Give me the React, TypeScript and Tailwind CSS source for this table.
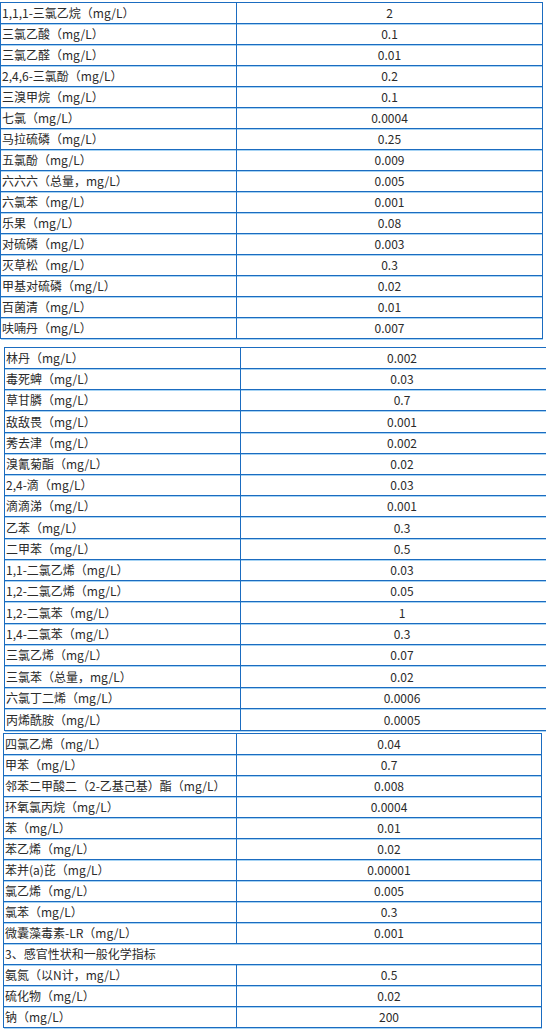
type Row = { name: string; value?: string; span?: boolean; tall?: boolean };

const tableOne: Row[] = [
  { name: "1,1,1-三氯乙烷（mg/L）", value: "2" },
  { name: "三氯乙酸（mg/L）", value: "0.1" },
  { name: "三氯乙醛（mg/L）", value: "0.01" },
  { name: "2,4,6-三氯酚（mg/L）", value: "0.2" },
  { name: "三溴甲烷（mg/L）", value: "0.1" },
  { name: "七氯（mg/L）", value: "0.0004" },
  { name: "马拉硫磷（mg/L）", value: "0.25" },
  { name: "五氯酚（mg/L）", value: "0.009" },
  { name: "六六六（总量，mg/L）", value: "0.005" },
  { name: "六氯苯（mg/L）", value: "0.001" },
  { name: "乐果（mg/L）", value: "0.08" },
  { name: "对硫磷（mg/L）", value: "0.003" },
  { name: "灭草松（mg/L）", value: "0.3" },
  { name: "甲基对硫磷（mg/L）", value: "0.02" },
  { name: "百菌清（mg/L）", value: "0.01" },
  { name: "呋喃丹（mg/L）", value: "0.007" },
];

const tableTwo: Row[] = [
  { name: "林丹（mg/L）", value: "0.002" },
  { name: "毒死蜱（mg/L）", value: "0.03" },
  { name: "草甘膦（mg/L）", value: "0.7" },
  { name: "敌敌畏（mg/L）", value: "0.001", tall: true },
  { name: "莠去津（mg/L）", value: "0.002" },
  { name: "溴氰菊酯（mg/L）", value: "0.02" },
  { name: "2,4-滴（mg/L）", value: "0.03" },
  { name: "滴滴涕（mg/L）", value: "0.001" },
  { name: "乙苯（mg/L）", value: "0.3", tall: true },
  { name: "二甲苯（mg/L）", value: "0.5" },
  { name: "1,1-二氯乙烯（mg/L）", value: "0.03" },
  { name: "1,2-二氯乙烯（mg/L）", value: "0.05" },
  { name: "1,2-二氯苯（mg/L）", value: "1", tall: true },
  { name: "1,4-二氯苯（mg/L）", value: "0.3" },
  { name: "三氯乙烯（mg/L）", value: "0.07" },
  { name: "三氯苯（总量，mg/L）", value: "0.02", tall: true },
  { name: "六氯丁二烯（mg/L）", value: "0.0006" },
  { name: "丙烯酰胺（mg/L）", value: "0.0005", tall: true },
];

const tableThree: Row[] = [
  { name: "四氯乙烯（mg/L）", value: "0.04" },
  { name: "甲苯（mg/L）", value: "0.7" },
  { name: "邻苯二甲酸二（2-乙基己基）酯（mg/L）", value: "0.008" },
  { name: "环氧氯丙烷（mg/L）", value: "0.0004" },
  { name: "苯（mg/L）", value: "0.01" },
  { name: "苯乙烯（mg/L）", value: "0.02" },
  { name: "苯并(a)芘（mg/L）", value: "0.00001" },
  { name: "氯乙烯（mg/L）", value: "0.005" },
  { name: "氯苯（mg/L）", value: "0.3" },
  { name: "微囊藻毒素-LR（mg/L）", value: "0.001" },
  { name: "3、感官性状和一般化学指标", span: true },
  { name: "氨氮（以N计，mg/L）", value: "0.5" },
  { name: "硫化物（mg/L）", value: "0.02" },
  { name: "钠（mg/L）", value: "200" },
];

// cells share one border style; the light shadow mimics the blurred blue rule
const cell = "border-b border-r border-[#1b6cc0] shadow-[0_1px_0_#a6d3f4]";

function LimitTable({ rows, cols, className }: { rows: Row[]; cols: string; className: string }) {
  return (
    <div className={`border-l border-t border-[#1b6cc0] ${className}`}>
      {rows.map((row) => (
        <div key={row.name} className={`grid ${cols} ${row.tall ? "h-[22px]" : "h-[21px]"}`}>
          {row.span ? (
            <div className={`col-span-2 flex items-center pl-[1px] ${cell}`}>{row.name}</div>
          ) : (
            <>
              <div className={`flex items-center whitespace-nowrap pl-[1px] ${cell}`}>{row.name}</div>
              <div className={`flex items-center justify-center ${cell}`}>{row.value}</div>
            </>
          )}
        </div>
      ))}
    </div>
  );
}

export default function App() {
  return (
    <div className="h-[1034px] w-[546px] overflow-hidden bg-white font-['Noto_Sans_CJK_SC',sans-serif] text-[12px] leading-none text-[#2a2a2a]">
      <LimitTable rows={tableOne} cols="grid-cols-[236px_1fr]" className="mt-[2px] w-[543px]" />
      <LimitTable rows={tableTwo} cols="grid-cols-[236px_1fr]" className="ml-[4px] mt-[8px] w-[560px]" />
      <LimitTable rows={tableThree} cols="grid-cols-[233px_1fr]" className="ml-[3px] mt-[2px] w-[539px]" />
    </div>
  );
}
